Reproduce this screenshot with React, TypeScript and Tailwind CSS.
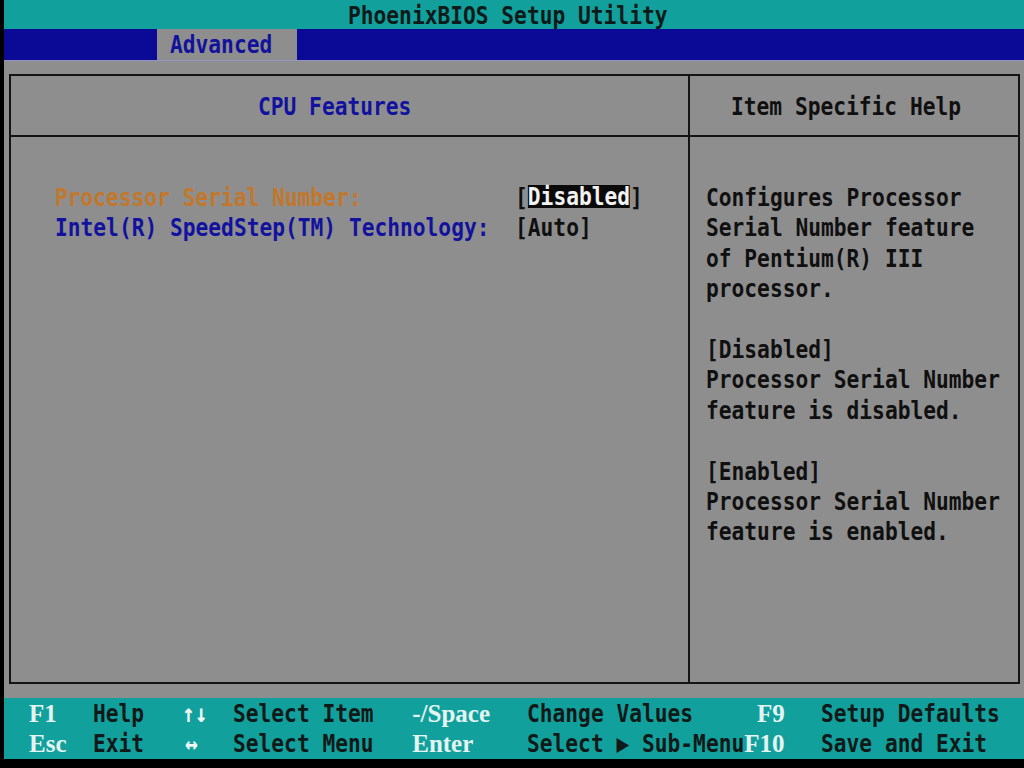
import type { ReactNode } from "react";
import clsx from "clsx";

// text-mode cell is 12.77px wide; the mono glyphs are squeezed to fit it
function T({ children, className }: { children: ReactNode; className?: string }) {
  return (
    <span className={clsx("inline-block origin-left scale-x-[0.849] whitespace-pre", className)}>
      {children}
    </span>
  );
}

function Key({ children }: { children: ReactNode }) {
  return (
    <span className="font-['Liberation_Serif',serif] text-[25px] font-bold text-[#e4f4f2] whitespace-pre">
      {children}
    </span>
  );
}

const help: string[] = [
  "Configures Processor",
  "Serial Number feature",
  "of Pentium(R) III",
  "processor.",
  "",
  "[Disabled]",
  "Processor Serial Number",
  "feature is disabled.",
  "",
  "[Enabled]",
  "Processor Serial Number",
  "feature is enabled.",
];

export default function App() {
  return (
    <div className="w-[1024px] h-[768px] overflow-hidden bg-black pl-[3.6px] font-['DejaVu_Sans_Mono',monospace] text-[25px] font-bold">
      <div className="w-[1020.4px] flex flex-col">
        {/* title */}
        <div className="h-[29px] leading-[31px] bg-[#12a09c] text-[#0c1a1a] pl-[344.8px]">
          <T>PhoenixBIOS Setup Utility</T>
        </div>

        {/* menu bar */}
        <div className="h-[31px] bg-[#0b0a96] flex">
          <div className="ml-[153.2px] w-[140.5px] h-full bg-[#8e8e8e] pl-[12.77px] leading-[32px] text-[#12129a]">
            <T>Advanced</T>
          </div>
        </div>

        {/* body */}
        <div className="h-[638px] bg-[#8e8e8e] border-t border-[#9494c2] pt-[13px] pl-[5.4px]">
          <div className="w-[1011px] h-[610px] border-2 border-[#141414] flex overflow-hidden">
            <div className="w-[679px] shrink-0 h-full border-r-2 border-[#141414] flex flex-col">
              <div className="h-[61px] border-b-2 border-[#141414] flex items-center pl-[247px] pt-[2px] text-[#12129e]">
                <T>CPU Features</T>
              </div>
              <div className="pt-[46px] pl-[43.7px] flex flex-col">
                <div className="h-[30.4px] leading-[30.4px]">
                  <T>
                    <span className="text-[#c2782c]">{"Processor Serial Number:".padEnd(36, " ")}</span>
                    <span className="text-[#101010]">[</span>
                    <span className="inline-block h-[23px] leading-[23px] align-[1px] bg-[#0a0a0a] text-[#f2f2f2]">Disabled</span>
                    <span className="text-[#101010]">]</span>
                  </T>
                </div>
                <div className="h-[30.4px] leading-[30.4px]">
                  <T>
                    <span className="text-[#12129e]">{"Intel(R) SpeedStep(TM) Technology:".padEnd(36, " ")}</span>
                    <span className="text-[#101010]">[Auto]</span>
                  </T>
                </div>
              </div>
            </div>

            <div className="flex-1 min-w-0 overflow-hidden h-full flex flex-col">
              <div className="h-[61px] border-b-2 border-[#141414] flex items-center pl-[41.5px] pt-[2px] text-[#101010]">
                <T>Item Specific Help</T>
              </div>
              <div className="pt-[46px] pl-[16px] flex flex-col text-[#101010]">
                {help.map((line, i) => (
                  <div key={i} className="h-[30.4px] leading-[30.4px]">
                    <T>{line}</T>
                  </div>
                ))}
              </div>
            </div>
          </div>
        </div>

        {/* key legend */}
        <div className="h-[61px] bg-[#12a09c] pl-[25.5px] text-[#101818] flex flex-col">
          <div className="h-[30.5px] leading-[32px] flex">
            <div className="w-[63.85px] shrink-0"><Key>F1</Key></div>
            <div className="w-[89.4px] shrink-0"><T>Help</T></div>
            <div className="w-[51.1px] shrink-0 text-[#eef8f6]"><T>↑↓</T></div>
            <div className="w-[178.8px] shrink-0"><T>Select Item</T></div>
            <div className="w-[114.9px] shrink-0"><Key>-/Space</Key></div>
            <div className="w-[229.9px] shrink-0"><T>Change Values</T></div>
            <div className="w-[63.85px] shrink-0"><Key>F9</Key></div>
            <div className="shrink-0"><T>Setup Defaults</T></div>
          </div>
          <div className="h-[30.5px] leading-[30.5px] flex">
            <div className="w-[63.85px] shrink-0"><Key>Esc</Key></div>
            <div className="w-[89.4px] shrink-0"><T>Exit</T></div>
            <div className="w-[51.1px] shrink-0 pl-[3px] text-[#eef8f6]"><T>↔</T></div>
            <div className="w-[178.8px] shrink-0"><T>Select Menu</T></div>
            <div className="w-[114.9px] shrink-0"><Key>Enter</Key></div>
            <div className="w-[217.1px] shrink-0"><T>Select ▶ Sub-Menu</T></div>
            <div className="w-[76.6px] shrink-0"><Key>F10</Key></div>
            <div className="shrink-0"><T>Save and Exit</T></div>
          </div>
        </div>
      </div>
    </div>
  );
}
